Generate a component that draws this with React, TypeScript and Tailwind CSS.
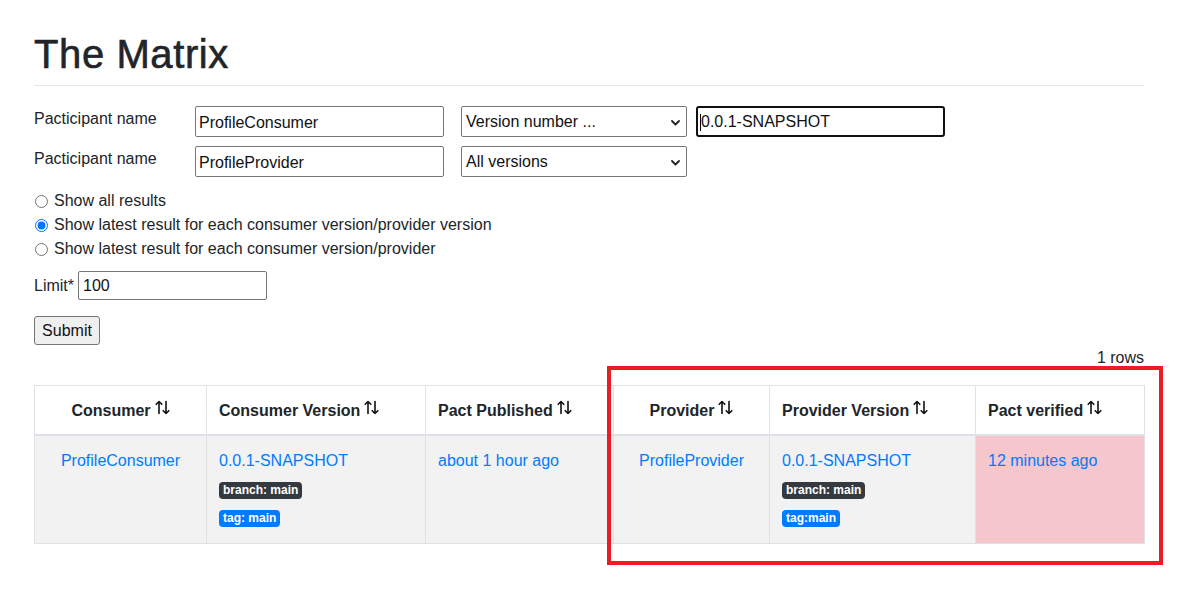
import React from 'react';

const SortIcon = () => (
    <svg width="15" height="15" viewBox="0 0 15 15" className="inline-block relative -top-[4px] ml-[4px]" fill="none" stroke="#111" strokeWidth="1.6" strokeLinecap="round" strokeLinejoin="round">
        <path d="M4 13.5V1.5M1.2 4.3L4 1.5l2.8 2.8" />
        <path d="M11 1.5v12M8.2 10.7L11 13.5l2.8-2.8" />
    </svg>
);

const Chevron = () => (
    <svg width="9" height="6" viewBox="0 0 9 6" className="absolute right-[6px] top-[13px]" fill="none" stroke="#222" strokeWidth="1.8" strokeLinecap="round" strokeLinejoin="round">
        <path d="M1 1l3.5 3.5L8 1" />
    </svg>
);

const FakeSelect = ({ value }: { value: string }) => (
    <div className="relative w-[226px] h-[31px] border border-[#767676] rounded-[2px] bg-white pl-[4px] text-[16px] leading-[30px] text-[#111]">
        {value}
        <Chevron />
    </div>
);

const Badge = ({ text, dark }: { text: string; dark?: boolean }) => (
    <div className="flex">
        <span
            className={
                dark
                    ? 'h-[17px] px-[4px] rounded-[4px] bg-[#343a40] text-white text-[12px] font-bold leading-[17px]'
                    : 'h-[17px] px-[4px] rounded-[4px] bg-[#007bff] text-white text-[12px] font-bold leading-[17px]'
            }
        >
            {text}
        </span>
    </div>
);

const headers = [
    { label: 'Consumer', w: 'w-[172px]', center: true },
    { label: 'Consumer Version', w: 'w-[219px]' },
    { label: 'Pact Published', w: 'w-[188px]' },
    { label: 'Provider', w: 'w-[156px]', center: true },
    { label: 'Provider Version', w: 'w-[206px]' },
    { label: 'Pact verified', w: 'w-[169px]' },
];

export default function App() {
    return (
        <div className="relative min-h-[591px] bg-white text-[#212529] font-['Liberation_Sans',Arial,sans-serif] text-[16px]">
            <div className="ml-[34px] w-[1110px]">
                <h1 className="pt-[30px] pb-[7px] text-[40px] leading-[48px] font-medium tracking-[0.6px] [-webkit-text-stroke:0.6px_#212529] border-b border-[#e6e6e6]">
                    The Matrix
                </h1>

                <div className="mt-[20px] flex flex-col gap-[9px]">
                    <div className="flex items-start">
                        <div className="w-[161px] pt-[1px] leading-[24px]">Pacticipant name</div>
                        <input
                            readOnly
                            value="ProfileConsumer"
                            className="w-[249px] h-[31px] border border-[#767676] rounded-[2px] px-[3px] pt-[2px] text-[#111] outline-none"
                        />
                        <div className="ml-[17px]">
                            <FakeSelect value="Version number ..." />
                        </div>
                        <div className="relative ml-[9px] w-[249px] h-[31px] border-2 border-[#101010] rounded-[3px] pl-[3px] leading-[28px] text-[#111]">
                            <span className="absolute left-[2px] top-[6px] w-px h-[17px] bg-black" />
                            0.0.1-SNAPSHOT
                        </div>
                    </div>
                    <div className="flex items-start">
                        <div className="w-[161px] pt-[1px] leading-[24px]">Pacticipant name</div>
                        <input
                            readOnly
                            value="ProfileProvider"
                            className="w-[249px] h-[31px] border border-[#767676] rounded-[2px] px-[3px] pt-[2px] text-[#111] outline-none"
                        />
                        <div className="ml-[17px]">
                            <FakeSelect value="All versions" />
                        </div>
                    </div>
                </div>

                <div className="mt-[12px] flex flex-col">
                    {[
                        'Show all results',
                        'Show latest result for each consumer version/provider version',
                        'Show latest result for each consumer version/provider',
                    ].map((t, i) => (
                        <label key={t} className="flex items-center h-[24px] leading-[24px]">
                            <input
                                type="radio"
                                name="latest"
                                readOnly
                                checked={i === 1}
                                className="w-[13px] h-[13px] m-0 ml-px"
                            />
                            <span className="ml-[6px]">{t}</span>
                        </label>
                    ))}
                </div>

                <div className="mt-[10px] flex items-center">
                    <span>Limit*</span>
                    <input
                        readOnly
                        value="100"
                        className="ml-[4px] w-[189px] h-[29px] border border-[#767676] rounded-[2px] px-[4px] text-[#111] outline-none"
                    />
                </div>

                <button className="mt-[16px] h-[29px] w-[66px] border border-[#767676] rounded-[3px] bg-[#efefef] text-[#111] leading-[27px]">
                    Submit
                </button>

                <div className="text-right leading-[24px] mt-px">1 rows</div>

                <table className="mt-[15px] w-[1110px] table-fixed border-collapse border border-[#dee2e6]">
                    <thead>
                        <tr>
                            {headers.map((h) => (
                                <th
                                    key={h.label}
                                    className={`${h.w} ${h.center ? 'text-center' : 'text-left'} border border-[#dee2e6] border-b-2 px-[12px] pt-[13px] pb-[11px] leading-[24px] font-bold align-top`}
                                >
                                    {h.label}
                                    <SortIcon />
                                </th>
                            ))}
                        </tr>
                    </thead>
                    <tbody>
                        <tr className="bg-[#f2f2f2] align-top text-[#007bff]">
                            <td className="border border-[#dee2e6] text-center px-[12px] pt-[13px] leading-[24px]">ProfileConsumer</td>
                            <td className="border border-[#dee2e6] px-[12px] pt-[13px] pb-[16px] leading-[24px]">
                                <div>0.0.1-SNAPSHOT</div>
                                <div className="mt-[9px]">
                                    <Badge text="branch: main" dark />
                                </div>
                                <div className="mt-[11px]">
                                    <Badge text="tag: main" />
                                </div>
                            </td>
                            <td className="border border-[#dee2e6] px-[12px] pt-[13px] leading-[24px]">about 1 hour ago</td>
                            <td className="border border-[#dee2e6] text-center px-[12px] pt-[13px] leading-[24px]">ProfileProvider</td>
                            <td className="border border-[#dee2e6] px-[12px] pt-[13px] pb-[16px] leading-[24px]">
                                <div>0.0.1-SNAPSHOT</div>
                                <div className="mt-[9px]">
                                    <Badge text="branch: main" dark />
                                </div>
                                <div className="mt-[11px]">
                                    <Badge text="tag:main" />
                                </div>
                            </td>
                            <td className="border border-[#dee2e6] bg-[#f5c6cb] px-[12px] pt-[13px] leading-[24px]">12 minutes ago</td>
                        </tr>
                    </tbody>
                </table>
            </div>

            <div className="absolute left-[607px] top-[366px] w-[556px] h-[199px] border-[4px] border-[#ed1c24] pointer-events-none" />
        </div>
    );
}
